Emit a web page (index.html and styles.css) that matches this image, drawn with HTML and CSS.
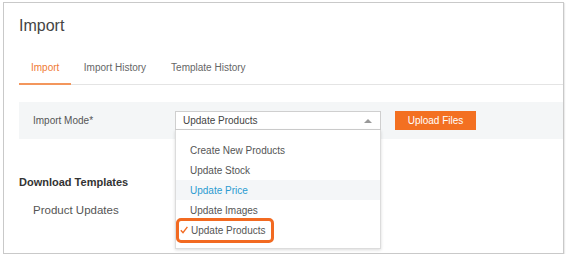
FILE: index.html
```html
<!DOCTYPE html>
<html lang="en">

<head>
    <meta charset="UTF-8">
    <meta name="viewport" content="width=device-width, initial-scale=1.0">
    <title>Import</title>
    <link rel="stylesheet" href="styles.css">
</head>

<body>
    <div class="card">
        <h1 class="page-title">Import</h1>

        <div class="tabs">
            <a class="tab active" href="#">Import</a>
            <a class="tab" href="#">Import History</a>
            <a class="tab" href="#">Template History</a>
        </div>

        <div class="mode-row">
            <label class="mode-label">Import Mode*</label>
            <div class="select-wrap">
                <div class="select">
                    <span>Update Products</span>
                    <span class="arrow"></span>
                </div>
                <ul class="dropdown">
                    <li>Create New Products</li>
                    <li>Update Stock</li>
                    <li class="hover">Update Price</li>
                    <li>Update Images</li>
                    <li class="selected">
                        <span class="selected-box">
                            <svg class="check" width="8" height="8" viewBox="0 0 8 8">
                                <polyline points="0.8,4.2 3,6.6 7.4,0.8" fill="none" stroke="#f26a21" stroke-width="1.4" />
                            </svg>
                            Update Products
                        </span>
                    </li>
                </ul>
            </div>
            <button class="btn">Upload Files</button>
        </div>

        <h3 class="section-title">Download Templates</h3>
        <div class="template-item">Product Updates</div>
    </div>
</body>

</html>
```

FILE: styles.css
```css
* {
    margin: 0;
    padding: 0;
    box-sizing: border-box;
    font-family: 'Liberation Sans', Arial, sans-serif;
}

body {
    background-color: #fff;
    padding: 2px 0 0 3px;
}

.card {
    width: 561px;
    height: 252px;
    border: 1px solid #c9c9c9;
    box-shadow: 1px 1px 1px rgba(0, 0, 0, 0.08);
    padding: 13px 0 0 15px;
}

.page-title {
    font-size: 16px;
    font-weight: normal;
    line-height: 20px;
    color: #444;
}

.tabs {
    display: flex;
    margin-top: 16px;
    border-bottom: 1px solid #e4e4e4;
}

.tab {
    font-size: 10px;
    line-height: 14px;
    padding: 9px 12.5px 8px;
    color: #666;
    text-decoration: none;
    margin-bottom: -1px;
    border-bottom: 2px solid transparent;
}

.tab.active {
    padding: 9px 12px 8px;
    color: #f07a35;
    border-bottom-color: #f3965c;
}

.mode-row {
    display: flex;
    align-items: center;
    margin-top: 17px;
    height: 37px;
    padding-left: 14px;
    background-color: #f4f6f7;
}

.mode-label {
    width: 142px;
    font-size: 10px;
    color: #555;
}

.select-wrap {
    position: relative;
    width: 206px;
}

.select {
    display: flex;
    justify-content: space-between;
    align-items: center;
    height: 19px;
    padding: 0 8px 0 7px;
    background-color: #fff;
    border: 1px solid #cfcfcf;
    font-size: 10px;
    color: #444;
}

.arrow {
    width: 0;
    height: 0;
    border-left: 4px solid transparent;
    border-right: 4px solid transparent;
    border-bottom: 4px solid #999;
}

.dropdown {
    position: absolute;
    top: 100%;
    left: 0;
    width: 206px;
    height: 119px;
    list-style: none;
    background-color: #fff;
    border: 1px solid #dcdcdc;
    border-top: none;
    box-shadow: 0 1px 3px rgba(0, 0, 0, 0.15);
    padding-top: 10px;
    z-index: 2;
}

.dropdown li {
    height: 20px;
    display: flex;
    align-items: center;
    padding-left: 14px;
    font-size: 10px;
    color: #555;
}

.dropdown li.hover {
    background-color: #f4f6f8;
    color: #2a9bd1;
}

.dropdown li.selected {
    padding-left: 0;
}

.selected-box {
    display: flex;
    align-items: center;
    height: 25px;
    flex-shrink: 0;
    padding: 0 5px 0 1px;
    border: 3px solid #f26a21;
    border-radius: 5px;
}

.check {
    margin-right: 3px;
}

.btn {
    margin-left: 14px;
    width: 81px;
    height: 19px;
    background-color: #f37021;
    color: #fff;
    border: none;
    font-size: 10px;
}

.section-title {
    margin-top: 36px;
    font-size: 11px;
    line-height: 14px;
    color: #333;
}

.template-item {
    margin-top: 14px;
    padding-left: 14px;
    font-size: 11.5px;
    line-height: 14px;
    color: #555;
}
```
